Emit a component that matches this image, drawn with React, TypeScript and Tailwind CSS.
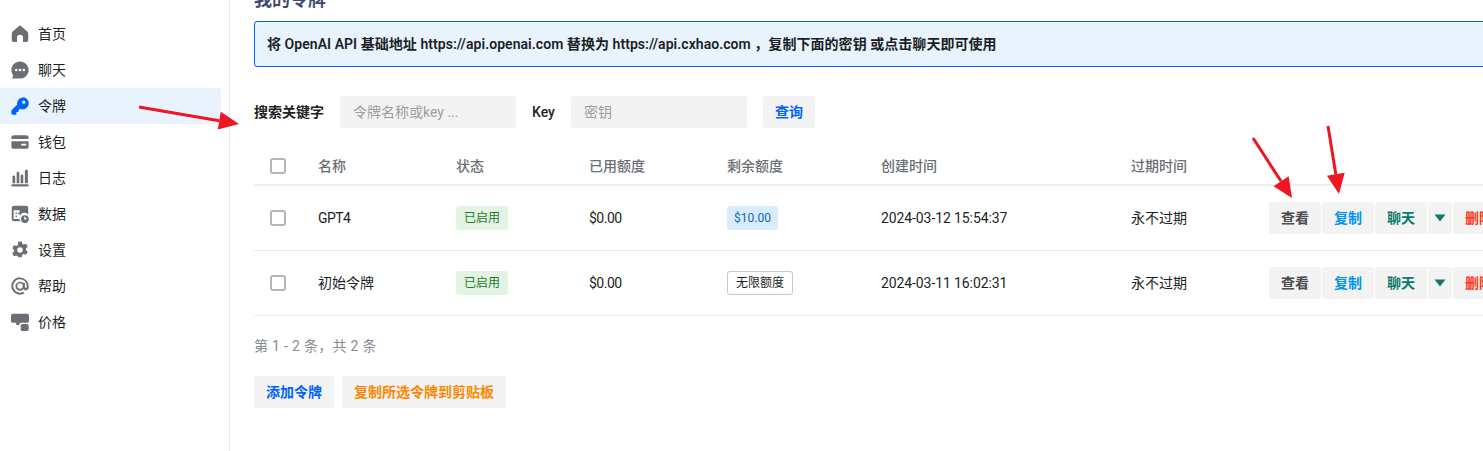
import type { ReactNode } from "react";

const font = "font-['Roboto','Noto_Sans_CJK_SC',sans-serif]";

const icons: Record<string, ReactNode> = {
  home: <path d="M10.300 1.600a2.500 2.500 0 0 1 3.400 0l8.300 7.500c.6.500 1 1.300 1 2.100V20a2.800 2.800 0 0 1-2.800 2.800H16V17a4 4 0 0 0-8 0v5.800H3.800A2.800 2.800 0 0 1 1 20v-8.800c0-.8.400-1.600 1-2.100z" />,
  chat: <path fillRule="evenodd" d="M12 .500C5.600.500.500 5.600.500 12c0 2.700 1 5.200 2.500 7.200l-1.200 2.700c-.3.700.2 1.500.9 1.500H12c6.400 0 11.500-5.100 11.500-11.500S18.400.500 12 .500zM7 10.300a1.700 1.700 0 1 0 0 3.400 1.700 1.700 0 0 0 0-3.400zm5 0a1.700 1.700 0 1 0 0 3.400 1.700 1.700 0 0 0 0-3.400zm5 0a1.700 1.700 0 1 0 0 3.400 1.700 1.700 0 0 0 0-3.400z" />,
  key: <path fillRule="evenodd" d="M15.500.500a8 8 0 1 1-3.400 15.200L10 17.800V20H7.300v2.700c0 .5-.4.800-.8.800H2.500c-1.100 0-2-.9-2-2v-3c0-.5.200-1 .6-1.300l7.200-7.200A8 8 0 0 1 15.500.500zm1.500 4.200a2.200 2.200 0 1 0 0 4.400 2.200 2.200 0 0 0 0-4.400z" />,
  wallet: <path fillRule="evenodd" d="M.500 6.500A3.500 3.500 0 0 1 4 3h16a3.500 3.500 0 0 1 3.500 3.500V8H.500zM.500 11h23v6.500A3.500 3.500 0 0 1 20 21H4a3.500 3.500 0 0 1-3.500-3.500zm13 4.500c0 .7.500 1.200 1.200 1.200h4.600a1.200 1.200 0 1 0 0-2.400h-4.600c-.7 0-1.200.5-1.200 1.200z" />,
  log: <path d="M18.500 2.500a2 2 0 0 1 4 0V19h-4zM12.800 9a1.800 1.800 0 0 1 3.600 0v10h-3.600zM7.500 5.500a1.800 1.800 0 0 1 3.600 0V19H7.500zM2 10.500a1.800 1.800 0 0 1 3.600 0V19H2zM1.800 20.300h20.400a1.500 1.500 0 0 1 0 3H1.800a1.500 1.500 0 0 1 0-3z" />,
  data: <path fillRule="evenodd" d="M4 1h16a3 3 0 0 1 3 3v8.800a6.500 6.500 0 0 0-10.500 8.700H4a3 3 0 0 1-3-3V4a3 3 0 0 1 3-3zM3.500 7v11.500h8V7zm2.500 3h2v2H6zm3.500 0h2v2h-2zM6 14h2v2H6zm12.500-.5a5.200 5.200 0 1 1 0 10.400 5.200 5.200 0 0 1 0-10.400zm-.9 2v3.800h3v-1.500h-1.400v-2.300z" />,
  gear: <path fillRule="evenodd" d="M9.800.500h4.400l.8 3.300 1.800 1 3.300-1 2.200 3.900-2.400 2.300v2l2.400 2.300-2.200 3.900-3.300-1-1.800 1-.8 3.300H9.800L9 20.200l-1.800-1-3.300 1-2.200-3.900 2.400-2.300v-2L1.700 9.700l2.200-3.900 3.300 1 1.800-1zM12 8.300a3.700 3.700 0 1 0 0 7.400 3.700 3.700 0 0 0 0-7.400z" />,
  help: <path fillRule="evenodd" d="M12 .500a11.500 11.500 0 1 0 5.800 21.400l-1.300-2.200A9 9 0 1 1 21 12v1c0 1-.6 1.500-1.300 1.500s-1.200-.6-1.200-1.500V7.500h-2.300v.6A6 6 0 1 0 16.800 16a3.700 3.700 0 0 0 6.700-3v-1A11.500 11.500 0 0 0 12 .500zm0 7.800a3.700 3.700 0 1 1 0 7.400 3.700 3.700 0 0 1 0-7.400z" />,
  price: <path d="M2.500 1h19A2.500 2.500 0 0 1 24 3.500v7a2.500 2.500 0 0 1-2.500 2.500H14a3 3 0 0 0-3 3H7v-3H2.500A2.500 2.500 0 0 1 0 10.500v-7A2.500 2.500 0 0 1 2.500 1zM15 14.500h6.500a2 2 0 0 1 2 2v5.500a2 2 0 0 1-2 2H15a2 2 0 0 1-2-2v-5.500a2 2 0 0 1 2-2z" />,
};

const navItems = [
  { key: "home", label: "首页" },
  { key: "chat", label: "聊天" },
  { key: "key", label: "令牌", active: true },
  { key: "wallet", label: "钱包" },
  { key: "log", label: "日志" },
  { key: "data", label: "数据" },
  { key: "gear", label: "设置" },
  { key: "help", label: "帮助" },
  { key: "price", label: "价格" },
];

const rows = [
  { name: "GPT4", quota: "$10.00", created: "2024-03-12 15:54:37", limited: true },
  { name: "初始令牌", quota: "无限额度", created: "2024-03-11 16:02:31", limited: false },
];

const tableCols = "grid grid-cols-[64px_138px_133px_138px_154px_250px_138px_auto] items-center";

function Checkbox() {
  return <span className="ml-4 block h-4 w-4 rounded-[3px] border-2 border-[#b5b5b7] bg-white" />;
}

function ActionBtn({ className, children }: { className: string; children: ReactNode }) {
  return (
    <button className={`flex h-8 shrink-0 items-center justify-center rounded-[3px] bg-[#f3f3f4] text-sm font-semibold ${className}`}>
      {children}
    </button>
  );
}

function Arrow({ x1, y1, x2, y2 }: { x1: number; y1: number; x2: number; y2: number }) {
  // head is drawn back from the tip along the shaft
  const dx = x2 - x1;
  const dy = y2 - y1;
  const len = Math.hypot(dx, dy);
  const ux = dx / len;
  const uy = dy / len;
  const bx = x2 - ux * 20;
  const by = y2 - uy * 20;
  const pts = `${x2},${y2} ${bx - uy * 9},${by + ux * 9} ${bx + uy * 9},${by - ux * 9}`;
  return (
    <>
      <line x1={x1} y1={y1} x2={bx} y2={by} stroke="#ee1620" strokeWidth="3" />
      <polygon points={pts} fill="#ee1620" />
    </>
  );
}

export default function App() {
  return (
    <div className={`relative flex h-[451px] w-[1483px] overflow-hidden bg-white text-[#1c1f23] ${font}`}>
      {/* Sidebar */}
      <aside className="flex w-[230px] shrink-0 flex-col border-r border-[#e8e9ea] pt-4 pr-2">
        {navItems.map((item) => (
          <div
            key={item.key}
            className={`flex h-9 items-center gap-[9px] rounded-r-[3px] pl-[11px] text-sm ${item.active ? "bg-[#e9f3fe]" : ""}`}
          >
            <svg
              viewBox="0 0 24 24"
              className={`h-[18px] w-[18px] ${item.active ? "fill-[#0064fa]" : "fill-[#6b6f75]"}`}
            >
              {icons[item.key]}
            </svg>
            <span>{item.label}</span>
          </div>
        ))}
      </aside>

      {/* Main area */}
      <main className="min-w-0 flex-1 pl-6">
        <h3 className="mt-[-12px] h-[33px] text-lg leading-[24px] font-bold text-[#3f4a6b]">我的令牌</h3>

        <div className="flex h-[46px] w-[1240px] items-center rounded-[3px] border border-[#0064fa] bg-[#e9f3fe] pl-3 text-sm font-semibold tracking-[0.05px]">
          将 OpenAI API 基础地址 https://api.openai.com 替换为 https://api.cxhao.com ，复制下面的密钥 或点击聊天即可使用
        </div>

        <div className="mt-[29px] flex items-center text-sm">
          <span className="w-[86px] font-semibold">搜索关键字</span>
          <div className="flex h-8 w-[176px] items-center rounded-[3px] bg-[#f3f3f4] pl-[13px] text-[#9a9da1]">令牌名称或key ...</div>
          <span className="ml-4 w-[39px] font-medium">Key</span>
          <div className="flex h-8 w-[176px] items-center rounded-[3px] bg-[#f3f3f4] pl-[13px] text-[#9a9da1]">密钥</div>
          <button className="ml-4 h-8 w-[52px] rounded-[3px] bg-[#f3f3f4] font-semibold text-[#0064fa]">查询</button>
        </div>

        <div className="mt-[20px] w-[1300px] text-sm">
          <div className={`${tableCols} h-[38px] border-b-2 border-[#eeeeef] font-medium text-[#6b6f75]`}>
            <Checkbox />
            <span>名称</span>
            <span>状态</span>
            <span>已用额度</span>
            <span>剩余额度</span>
            <span>创建时间</span>
            <span>过期时间</span>
          </div>

          {rows.map((row) => (
            <div key={row.name} className={`${tableCols} h-[65px] border-b border-[#ececed]`}>
              <Checkbox />
              <span className={row.limited ? "tracking-[-0.6px]" : ""}>{row.name}</span>
              <span>
                <span className="inline-flex h-6 w-[52px] items-center justify-center rounded-[3px] bg-[#e4f4e3] text-xs text-[#1b7a2f]">已启用</span>
              </span>
              <span className="tracking-[-0.5px]">$0.00</span>
              <span>
                {row.limited ? (
                  <span className="inline-flex h-6 w-[51px] items-center justify-center rounded-[3px] bg-[#d9ecfc] text-xs text-[#0b68b8]">{row.quota}</span>
                ) : (
                  <span className="inline-flex h-6 w-[66px] items-center justify-center rounded-[3px] border border-[#c6cacd] text-xs">{row.quota}</span>
                )}
              </span>
              <span className="tracking-[-0.1px]">{row.created}</span>
              <span>永不过期</span>
              <div className="flex w-[240px] gap-px">
                <ActionBtn className="w-[52px] text-[#4a4c50]">查看</ActionBtn>
                <ActionBtn className="w-[52px] text-[#0095ee]">复制</ActionBtn>
                <ActionBtn className="w-[52px] rounded-r-none text-[#0a7a6d]">聊天</ActionBtn>
                <ActionBtn className="w-6 rounded-l-none">
                  <svg viewBox="0 0 12 8" className="h-2 w-3 fill-[#0a7a6d]"><path d="M.500.500h11L6 7.500z" /></svg>
                </ActionBtn>
                <ActionBtn className="w-[52px] text-[#f93920]">删除</ActionBtn>
              </div>
            </div>
          ))}
        </div>

        <div className="mt-[20px] text-sm leading-5 tracking-[0.3px] text-[#888b90]">第 1 - 2 条，共 2 条</div>

        <div className="mt-5 flex gap-2 text-sm font-semibold">
          <button className="h-8 w-[80px] rounded-[3px] bg-[#f3f3f4] text-[#0064fa]">添加令牌</button>
          <button className="h-8 w-[164px] rounded-[3px] bg-[#f3f3f4] text-[#fc8800]">复制所选令牌到剪贴板</button>
        </div>
      </main>

      {/* Red annotation arrows over the screenshot */}
      <svg className="pointer-events-none absolute top-0 left-0 h-[451px] w-[1483px]" viewBox="0 0 1483 451">
        <Arrow x1={139} y1={107} x2={239} y2={124} />
        <Arrow x1={1253} y1={138} x2={1292} y2={198} />
        <Arrow x1={1328} y1={126} x2={1339} y2={194} />
      </svg>
    </div>
  );
}
